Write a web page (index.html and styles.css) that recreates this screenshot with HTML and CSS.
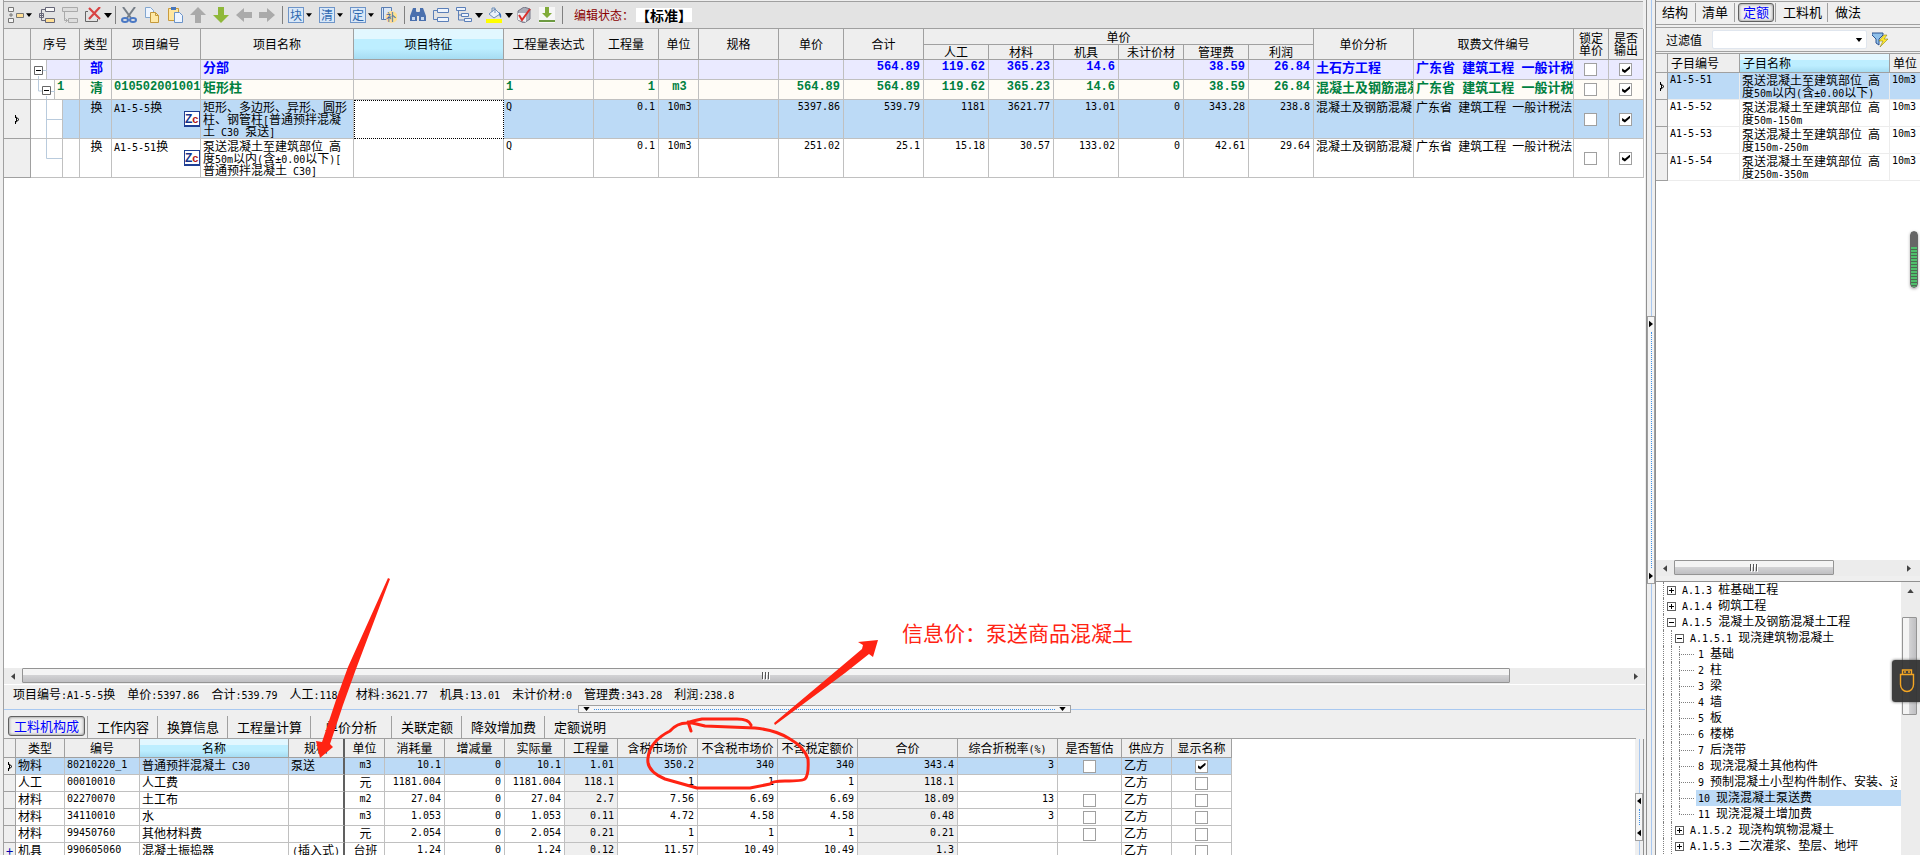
FILE: index.html
```
<!DOCTYPE html>
<html lang="zh-CN">
<head>
<meta charset="utf-8">
<title>工程计价</title>
<link rel="stylesheet" href="styles.css">
</head>
<body>
<svg class="defs" aria-hidden="true">
  <symbol id="mark" viewBox="0 0 6 9"><path d="M1.500 0v3M1.500 6v3M1.500 1.500l3.500 3-3.500 3M2.500 3v3" fill="none" stroke="#000" stroke-width="1"/></symbol>
  <symbol id="down" viewBox="0 0 8 5"><path d="M0 0h8L4 5z"/></symbol>
  <symbol id="right" viewBox="0 0 5 8"><path d="M0 0v8l5-4z"/></symbol>
  <symbol id="left" viewBox="0 0 5 8"><path d="M5 0v8L0 4z"/></symbol>
  <symbol id="up" viewBox="0 0 8 5"><path d="M0 5h8L4 0z"/></symbol>
  <symbol id="grip" viewBox="0 0 10 8"><path d="M1.500 0v7M4.500 0v7M7.500 0v7" stroke="#555"/><path d="M2.500 1v7M5.500 1v7M8.500 1v7" stroke="#fff"/></symbol>
</svg>
<div class="app">
  <main class="left">
    <div class="toolbar">
      <button class="ic" aria-label="插入"><svg viewBox="0 0 16 16"><path d="M.5.500h5v4h-5zM.5 11.500h5v4h-5z" fill="#f4f4f4" stroke="#777"/><path d="M3 6v4M1 8h4" stroke="#777"/><path d="M8.500 6.500h7v4h-7z" fill="#ffdf95" stroke="#777"/></svg></button>
      <button class="dd" aria-label="更多"><svg><use href="#down"/></svg></button>
      <button class="ic" aria-label="插入子项"><svg viewBox="0 0 16 16"><path d="M6.500.500h9v4h-9z" fill="#f8f8f8" stroke="#667"/><path d="M6.500 11.500h9v4h-9z" fill="#ffdf95" stroke="#667"/><path d="M2.500 6V2.500h4M2.500 11v2.500h4M.5 6.500h4v4h-4zM0 8.500h5M2.500 6v5" fill="none" stroke="#667"/></svg></button>
      <button class="ic" aria-label="添加子项"><svg viewBox="0 0 16 16" fill="#ddd" stroke="#aaa"><path d="M.5.500h15v4H.5zM6.500 11.500h9v4h-9z"/><path d="M2.500 5v8.500h3M3.500 11.500l2 2-2 2" fill="none"/></svg></button>
      <button class="ic" aria-label="删除"><svg viewBox="0 0 16 16"><path d="M3 4.500H.5v10h12V12" fill="none" stroke="#666"/><path d="M4 1l11 11M15 0L4 12" stroke="#d84444" stroke-width="2.200"/></svg></button>
      <button class="dd wide" aria-label="更多"><svg><use href="#down"/></svg></button>
      <i class="sep"></i>
      <button class="ic" aria-label="剪切"><svg viewBox="0 0 16 16"><path d="M2 0l8 11M14 0L6 11" stroke="#777f88" stroke-width="2"/><g fill="none" stroke="#4a78c4" stroke-width="2"><ellipse cx="4" cy="13" rx="3" ry="2"/><ellipse cx="12" cy="13" rx="3" ry="2"/></g></svg></button>
      <button class="ic" aria-label="复制"><svg viewBox="0 0 16 16"><path d="M1.500.5h5l3 3v7h-8z" fill="#eef5ff" stroke="#82a6cf"/><path d="M6.500 5.500h5l3 3v7h-8z" fill="#ffe9a6" stroke="#c4993c"/><path d="M11.500 5.500v3h3" fill="none" stroke="#c4993c"/></svg></button>
      <button class="ic" aria-label="粘贴"><svg viewBox="0 0 16 16"><path d="M1.500 1.500h10v12h-10z" fill="#ffe7a0" stroke="#c99b3c"/><path d="M4 0h5v3H4z" fill="#4776bb"/><path d="M7.500 5.500h5l3 3v7h-8z" fill="#eef5ff" stroke="#6b93c8"/></svg></button>
      <button class="ic" aria-label="上移"><svg viewBox="0 0 16 16"><path d="M8 0l8 8h-5v8H5V8H0z" fill="#aaa"/></svg></button>
      <button class="ic" aria-label="下移"><svg viewBox="0 0 16 16"><path d="M8 16L0 8h5V0h6v8h5z" fill="#8fb83a"/></svg></button>
      <button class="ic" aria-label="左移"><svg viewBox="0 0 16 16"><path d="M0 8l8-7v4h8v6H8v4z" fill="#aaa"/></svg></button>
      <button class="ic" aria-label="右移"><svg viewBox="0 0 16 16"><path d="M16 8L8 1v4H0v6h8v4z" fill="#aaa"/></svg></button>
      <i class="sep"></i>
      <button class="ic boxed">块</button>
      <button class="dd" aria-label="块菜单"><svg><use href="#down"/></svg></button>
      <button class="ic boxed">清</button>
      <button class="dd" aria-label="清单菜单"><svg><use href="#down"/></svg></button>
      <button class="ic boxed">定</button>
      <button class="dd" aria-label="定额菜单"><svg><use href="#down"/></svg></button>
      <button class="ic supp" aria-label="补充"><svg viewBox="0 0 16 16"><path d="M.5.500h10v12H.5z" fill="#dbe7f6" stroke="#5b7fb4"/><path d="M2.500 0v13" stroke="#5b7fb4"/><circle cx="10.500" cy="10" r="6" fill="#ffdf95"/></svg><span>补</span></button>
      <i class="sep"></i>
      <button class="ic" aria-label="查找"><svg viewBox="0 0 16 16" fill="#4a70ae"><path d="M3 1h3v3l1 2v8H0V9zM10 1h3l3 8v5H9V6l1-2z"/><path d="M6 5h4v4H6z"/><path d="M2 10h3v3H2zM11 10h3v3h-3z" fill="#c4d6f0"/></svg></button>
      <button class="ic" aria-label="展开"><svg viewBox="0 0 16 16" fill="#eef4fd" stroke="#5b7fb8"><path d="M4.500 1.500h11v4h-11zM4.500 10.500h11v4h-11z"/><path d="M4 3.500H.5v9H4" fill="none"/></svg></button>
      <button class="ic" aria-label="层级"><svg viewBox="0 0 16 16" fill="#eef4fd" stroke="#5b7fb8"><path d="M.5.500h9v3h-9zM5.500 6.500h7v3h-7zM8.500 11.500h7v3h-7z"/><path d="M2.500 4v9h6M2.500 8h3" fill="none"/></svg></button>
      <button class="dd wide" aria-label="层级菜单"><svg><use href="#down"/></svg></button>
      <button class="ic" aria-label="填充颜色"><svg viewBox="0 0 16 16"><path d="M0 12h16v4H0z" fill="#ff0"/><path d="M3 7l6-5 5 5-6 4z" fill="#eaf1fa" stroke="#6b8db8"/><path d="M6 5V1h3v5" fill="none" stroke="#6b8db8"/><path d="M13 5q3 2 2 6-2-1-2-6" fill="#3b70bd"/></svg></button>
      <button class="dd wide" aria-label="颜色菜单"><svg><use href="#down"/></svg></button>
      <button class="ic" aria-label="检查"><svg viewBox="0 0 16 16"><path d="M2 4l6-4 6 2v10l-6 4-6-3z" fill="#a9adb8" stroke="#778"/><path d="M2 6h8v9l-8-2z" fill="#eceef2"/><path d="M3 8l3 5 8-11" fill="none" stroke="#d9302c" stroke-width="2"/></svg></button>
      <button class="ic" aria-label="下载"><svg viewBox="0 0 16 16"><path d="M0 0h16v16H0z" fill="#f6f6f6"/><path d="M8 11L3 6h3V0h4v6h3z" fill="#80ab3a"/><path d="M0 13h16v2H0z" fill="#6d9a42"/></svg></button>
      <i class="sep"></i>
      <span class="state">编辑状态<span class="mid">：</span></span><b class="std">【标准】</b>
    </div>

    <section class="gridwrap">
      <table class="grid main">
        <colgroup><col class="w27"><col class="w49"><col class="w32"><col class="w89"><col class="w153"><col class="w150"><col class="w90"><col class="w65"><col class="w40"><col class="w80"><col class="w65"><col class="w80"><col class="w65"><col class="w65"><col class="w65"><col class="w65"><col class="w65"><col class="w65"><col class="w100"><col class="w160"><col class="w35"><col class="w35"></colgroup>
        <thead>
          <tr><th rowspan="2"></th><th rowspan="2">序号</th><th rowspan="2">类型</th><th rowspan="2">项目编号</th><th rowspan="2">项目名称</th><th rowspan="2" class="hot">项目特征</th><th rowspan="2">工程量表达式</th><th rowspan="2">工程量</th><th rowspan="2">单位</th><th rowspan="2">规格</th><th rowspan="2">单价</th><th rowspan="2">合计</th><th colspan="6">单价</th><th rowspan="2">单价分析</th><th rowspan="2">取费文件编号</th><th rowspan="2">锁定<br>单价</th><th rowspan="2">是否<br>输出</th></tr>
          <tr><th>人工</th><th>材料</th><th>机具</th><th>未计价材</th><th>管理费</th><th>利润</th></tr>
        </thead>
        <tbody>
          <tr class="part"><td class="gut"></td><td class="seq"><svg class="t1" viewBox="0 0 48 19"><path d="M0 0h15v19H0z" fill="#fff"/><path d="M15.500 0v19" stroke="#c0c0c0"/><path d="M7.500 16v3" stroke="#b9cbdd"/><path d="M3.500 6.500h8v8h-8z" fill="#fff" stroke="#666"/><path d="M5 10.500h5" stroke="#000"/><path d="M12 10.500h4" stroke="#b9cbdd"/></svg></td><td class="c">部</td><td></td><td>分部</td><td></td><td></td><td></td><td></td><td></td><td></td><td class="r">564.89</td><td class="r">119.62</td><td class="r">365.23</td><td class="r">14.6</td><td></td><td class="r">38.59</td><td class="r">26.84</td><td>土石方工程</td><td>广东省<span class="b"> </span>建筑工程<span class="b"> </span>一般计税</td><td class="k"><input type="checkbox" aria-label="锁定单价"></td><td class="k"><input type="checkbox" checked aria-label="是否输出"></td></tr>
          <tr class="item"><td class="gut"></td><td class="seq"><svg class="t1" viewBox="0 0 48 19"><path d="M0 0h23v19H0z" fill="#fff"/><path d="M23.500 0v19" stroke="#c0c0c0"/><path d="M7.500 0v11h4M15.500 16v3M20 11.500h4" stroke="#b9cbdd" fill="none"/><path d="M11.500 6.500h8v8h-8z" fill="#fff" stroke="#666"/><path d="M13 10.500h5" stroke="#000"/></svg><span class="one">1</span></td><td class="c">清</td><td class="l">010502001001</td><td>矩形柱</td><td></td><td class="l">1</td><td class="r">1</td><td class="c l">m3</td><td></td><td class="r">564.89</td><td class="r">564.89</td><td class="r">119.62</td><td class="r">365.23</td><td class="r">14.6</td><td class="r">0</td><td class="r">38.59</td><td class="r">26.84</td><td>混凝土及钢筋混凝</td><td>广东省<span class="b"> </span>建筑工程<span class="b"> </span>一般计税</td><td class="k"><input type="checkbox" aria-label="锁定单价"></td><td class="k"><input type="checkbox" checked aria-label="是否输出"></td></tr>
          <tr class="sub sel"><td class="gut"><svg class="mk"><use href="#mark"/></svg></td><td class="seq"><svg class="t2" viewBox="0 0 48 38"><path d="M0 0h31v39H0z" fill="#fff"/><path d="M31.500 0v39" stroke="#c0c0c0"/><path d="M15.500 0v39M16 19.500h15" stroke="#b9cbdd"/></svg></td><td class="c">换</td><td class="code"><span class="n">A1-5-5</span>换<span class="zc">Z<em>c</em></span></td><td>矩形、多边形、异形、圆形<br>柱、钢管柱<span class="n">[</span>普通预拌混凝<br>土<span class="n"> C30 </span>泵送<span class="n">]</span></td><td class="focus"></td><td class="n">Q</td><td class="r">0.1</td><td class="c n">10m3</td><td></td><td class="r">5397.86</td><td class="r">539.79</td><td class="r">1181</td><td class="r">3621.77</td><td class="r">13.01</td><td class="r">0</td><td class="r">343.28</td><td class="r">238.8</td><td>混凝土及钢筋混凝</td><td>广东省<span class="n"> </span>建筑工程<span class="n"> </span>一般计税法</td><td class="k"><input type="checkbox" aria-label="锁定单价"></td><td class="k"><input type="checkbox" checked aria-label="是否输出"></td></tr>
          <tr class="sub"><td class="gut"></td><td class="seq"><svg class="t2" viewBox="0 0 48 38"><path d="M31.500 0v39" stroke="#c0c0c0"/><path d="M15.500 0v19.500H31" stroke="#b9cbdd" fill="none"/></svg></td><td class="c">换</td><td class="code"><span class="n">A1-5-51</span>换<span class="zc">Z<em>c</em></span></td><td>泵送混凝土至建筑部位<span class="n"> </span>高<br>度<span class="n">50m</span>以内<span class="n">(</span>含<span class="n">±0.00</span>以下<span class="n">)[</span><br>普通预拌混凝土<span class="n"> C30]</span></td><td></td><td class="n">Q</td><td class="r">0.1</td><td class="c n">10m3</td><td></td><td class="r">251.02</td><td class="r">25.1</td><td class="r">15.18</td><td class="r">30.57</td><td class="r">133.02</td><td class="r">0</td><td class="r">42.61</td><td class="r">29.64</td><td>混凝土及钢筋混凝</td><td>广东省<span class="n"> </span>建筑工程<span class="n"> </span>一般计税法</td><td class="k"><input type="checkbox" aria-label="锁定单价"></td><td class="k"><input type="checkbox" checked aria-label="是否输出"></td></tr>
        </tbody>
      </table>
    </section>

    <div class="hbar">
      <button aria-label="向左滚动"><svg class="v"><use href="#left"/></svg></button>
      <div class="track"><div class="thumb main-thumb"><svg><use href="#grip"/></svg></div></div>
      <button aria-label="向右滚动"><svg class="v"><use href="#right"/></svg></button>
    </div>

    <div class="status">
      <span>项目编号<span class="n">:A1-5-5</span>换</span><span>单价<span class="n">:5397.86</span></span><span>合计<span class="n">:539.79</span></span><span>人工<span class="n">:1181</span></span><span>材料<span class="n">:3621.77</span></span><span>机具<span class="n">:13.01</span></span><span>未计价材<span class="n">:0</span></span><span>管理费<span class="n">:343.28</span></span><span>利润<span class="n">:238.8</span></span>
      <div class="hgrip"><svg><use href="#down"/></svg><i></i><svg><use href="#down"/></svg></div>
    </div>

    <nav class="tabs">
      <button class="on">工料机构成</button><button>工作内容</button><button>换算信息</button><button>工程量计算</button><button class="long">单价分析</button><button>关联定额</button><button>降效增加费</button><button>定额说明</button>
    </nav>

    <div class="bottom">
      <div class="bwrap">
        <table class="grid low">
          <colgroup><col class="w12"><col class="w49"><col class="w75"><col class="w149"><col class="w56"><col class="w40"><col class="w60"><col class="w60"><col class="w60"><col class="w53"><col class="w80"><col class="w80"><col class="w80"><col class="w100"><col class="w100"><col class="w64"><col class="w50"><col class="w60"></colgroup>
          <thead><tr><th></th><th>类型</th><th>编号</th><th class="hot">名称</th><th class="thick">规格</th><th>单位</th><th>消耗量</th><th>增减量</th><th>实际量</th><th>工程量</th><th>含税市场价</th><th>不含税市场价</th><th>不含税定额价</th><th>合价</th><th>综合折税率<span class="n">(%)</span></th><th>是否暂估</th><th>供应方</th><th>显示名称</th></tr></thead>
          <tbody>
            <tr class="sel"><td class="gut"><svg class="mk"><use href="#mark"/></svg></td><td>物料</td><td class="n">80210220_1</td><td>普通预拌混凝土<span class="n"> C30</span></td><td class="thick">泵送</td><td class="c n">m3</td><td class="r">10.1</td><td class="r">0</td><td class="r">10.1</td><td class="r">1.01</td><td class="r">350.2</td><td class="r">340</td><td class="r">340</td><td class="r">343.4</td><td class="r">3</td><td class="k"><input type="checkbox" aria-label="是否暂估"></td><td>乙方</td><td class="k"><input type="checkbox" checked aria-label="显示名称"></td></tr>
            <tr><td class="gut"></td><td>人工</td><td class="n">00010010</td><td>人工费</td><td class="thick"></td><td class="c">元</td><td class="r">1181.004</td><td class="r">0</td><td class="r">1181.004</td><td class="r ro">118.1</td><td class="r">1</td><td class="r">1</td><td class="r">1</td><td class="r ro">118.1</td><td></td><td></td><td>乙方</td><td class="k"><input type="checkbox" aria-label="显示名称"></td></tr>
            <tr><td class="gut"></td><td>材料</td><td class="n">02270070</td><td>土工布</td><td class="thick"></td><td class="c n">m2</td><td class="r">27.04</td><td class="r">0</td><td class="r">27.04</td><td class="r ro">2.7</td><td class="r">7.56</td><td class="r">6.69</td><td class="r">6.69</td><td class="r ro">18.09</td><td class="r">13</td><td class="k"><input type="checkbox" aria-label="是否暂估"></td><td>乙方</td><td class="k"><input type="checkbox" aria-label="显示名称"></td></tr>
            <tr><td class="gut"></td><td>材料</td><td class="n">34110010</td><td>水</td><td class="thick"></td><td class="c n">m3</td><td class="r">1.053</td><td class="r">0</td><td class="r">1.053</td><td class="r ro">0.11</td><td class="r">4.72</td><td class="r">4.58</td><td class="r">4.58</td><td class="r ro">0.48</td><td class="r">3</td><td class="k"><input type="checkbox" aria-label="是否暂估"></td><td>乙方</td><td class="k"><input type="checkbox" aria-label="显示名称"></td></tr>
            <tr><td class="gut"></td><td>材料</td><td class="n">99450760</td><td>其他材料费</td><td class="thick"></td><td class="c">元</td><td class="r">2.054</td><td class="r">0</td><td class="r">2.054</td><td class="r ro">0.21</td><td class="r">1</td><td class="r">1</td><td class="r">1</td><td class="r ro">0.21</td><td></td><td class="k"><input type="checkbox" aria-label="是否暂估"></td><td>乙方</td><td class="k"><input type="checkbox" aria-label="显示名称"></td></tr>
            <tr><td class="gut plus">+</td><td>机具</td><td class="n">990605060</td><td>混凝土振捣器</td><td class="thick end"><span class="n">(</span>插入式<span class="n">)</span></td><td class="c">台班</td><td class="r">1.24</td><td class="r">0</td><td class="r">1.24</td><td class="r ro">0.12</td><td class="r">11.57</td><td class="r">10.49</td><td class="r">10.49</td><td class="r ro">1.3</td><td></td><td></td><td>乙方</td><td class="k"><input type="checkbox" aria-label="显示名称"></td></tr>
          </tbody>
        </table>
      </div>
      <div class="vsplit small"><div class="vgrip"><svg class="v"><use href="#left"/></svg><i></i><svg class="v"><use href="#left"/></svg></div></div>
    </div>
  </main>

  <div class="vsplit big"><div class="vgrip"><svg class="v"><use href="#right"/></svg><i></i><svg class="v"><use href="#right"/></svg></div></div>

  <aside class="right">
    <nav class="tabs side"><button>结构</button><button>清单</button><button class="on">定额</button><button>工料机</button><button>做法</button></nav>
    <div class="filter"><label for="flt">过滤值</label><div class="combo"><select id="flt"><option></option></select><svg><use href="#down"/></svg></div><button aria-label="筛选"><svg viewBox="0 0 16 16"><path d="M0 1h11v2L7 7v6l-3-2V7L0 3z" fill="#8fc0ea" stroke="#2c5290"/><path d="M12 3l-5 6h4l-3 6 8-8h-4l3-4z" fill="#ffe92e" stroke="#8c8320" stroke-width=".6"/></svg></button></div>
    <div class="qwrap">
      <table class="grid quota">
        <colgroup><col class="w12"><col class="w72"><col class="w150"><col class="w40"></colgroup>
        <thead><tr><th></th><th>子目编号</th><th class="hot">子目名称</th><th>单位</th></tr></thead>
        <tbody>
          <tr class="sel"><td class="gut"><svg class="mk"><use href="#mark"/></svg></td><td class="n">A1-5-51</td><td>泵送混凝土至建筑部位<span class="n"> </span>高<br>度<span class="n">50m</span>以内<span class="n">(</span>含<span class="n">±0.00</span>以下<span class="n">)</span></td><td class="n">10m3</td></tr>
          <tr><td class="gut"></td><td class="n">A1-5-52</td><td>泵送混凝土至建筑部位<span class="n"> </span>高<br>度<span class="n">50m-150m</span></td><td class="n">10m3</td></tr>
          <tr><td class="gut"></td><td class="n">A1-5-53</td><td>泵送混凝土至建筑部位<span class="n"> </span>高<br>度<span class="n">150m-250m</span></td><td class="n">10m3</td></tr>
          <tr><td class="gut"></td><td class="n">A1-5-54</td><td>泵送混凝土至建筑部位<span class="n"> </span>高<br>度<span class="n">250m-350m</span></td><td class="n">10m3</td></tr>
        </tbody>
      </table>
    </div>
    <div class="hbar side">
      <button aria-label="向左滚动"><svg class="v"><use href="#left"/></svg></button>
      <div class="track"><div class="thumb side-thumb"><svg><use href="#grip"/></svg></div></div>
      <button aria-label="向右滚动"><svg class="v"><use href="#right"/></svg></button>
    </div>
    <div class="treewrap">
      <ul class="tree">
        <li><i class="g"></i><i class="box p"></i><span><span class="n">A.1.3 </span>桩基础工程</span></li>
        <li><i class="g"></i><i class="box p"></i><span><span class="n">A.1.4 </span>砌筑工程</span></li>
        <li><i class="g"></i><i class="box"></i><span><span class="n">A.1.5 </span>混凝土及钢筋混凝土工程</span></li>
        <li><i class="g"></i><i class="g"></i><i class="box"></i><span><span class="n">A.1.5.1 </span>现浇建筑物混凝土</span></li>
        <li class="leaf"><i class="g"></i><i class="g"></i><i class="g"></i><i class="h"></i><span><span class="n">1 </span>基础</span></li>
        <li class="leaf"><i class="g"></i><i class="g"></i><i class="g"></i><i class="h"></i><span><span class="n">2 </span>柱</span></li>
        <li class="leaf"><i class="g"></i><i class="g"></i><i class="g"></i><i class="h"></i><span><span class="n">3 </span>梁</span></li>
        <li class="leaf"><i class="g"></i><i class="g"></i><i class="g"></i><i class="h"></i><span><span class="n">4 </span>墙</span></li>
        <li class="leaf"><i class="g"></i><i class="g"></i><i class="g"></i><i class="h"></i><span><span class="n">5 </span>板</span></li>
        <li class="leaf"><i class="g"></i><i class="g"></i><i class="g"></i><i class="h"></i><span><span class="n">6 </span>楼梯</span></li>
        <li class="leaf"><i class="g"></i><i class="g"></i><i class="g"></i><i class="h"></i><span><span class="n">7 </span>后浇带</span></li>
        <li class="leaf"><i class="g"></i><i class="g"></i><i class="g"></i><i class="h"></i><span><span class="n">8 </span>现浇混凝土其他构件</span></li>
        <li class="leaf"><i class="g"></i><i class="g"></i><i class="g"></i><i class="h"></i><span><span class="n">9 </span>预制混凝土小型构件制作、安装、运</span></li>
        <li class="leaf cur"><i class="g"></i><i class="g"></i><i class="g"></i><i class="h"></i><span><span class="n">10 </span>现浇混凝土泵送费</span></li>
        <li class="leaf last"><i class="g"></i><i class="g"></i><i class="g"></i><i class="h"></i><span><span class="n">11 </span>现浇混凝土增加费</span></li>
        <li><i class="g"></i><i class="g"></i><i class="box p"></i><span><span class="n">A.1.5.2 </span>现浇构筑物混凝土</span></li>
        <li><i class="g"></i><i class="g"></i><i class="box p"></i><span><span class="n">A.1.5.3 </span>二次灌浆、垫层、地坪</span></li>
      </ul>
      <div class="vbar"><button aria-label="向上滚动"><svg><use href="#up"/></svg></button><div class="vthumb"></div></div>
    </div>
  </aside>
</div>

<div class="meter"></div>
<div class="usb"><svg viewBox="0 0 16 24" fill="none" stroke="#f5a623" stroke-width="1.400"><path d="M3.500 5V1h9v4M1.500 5.500h13v10a6.500 7 0 0 1-13 0z"/><path d="M5 3h2M9 3h2"/></svg></div>
<svg class="ink" viewBox="0 0 1920 855" aria-hidden="true">
  <g fill="#ff2313"><path d="M388 578l2 1-34 90-13 36-13 39 3 3-13 11-4-17 6 1 14-42 12-33z"/><path d="M774 723l62-52 26-22 1-4-5-3 20-2-5 17-4-3-24 19-70 52z"/></g>
  <g fill="none" stroke="#ff2313" stroke-width="3" stroke-linecap="round" stroke-linejoin="round"><path d="M751 725q-2-6-14-6h-35q-10 2-15 4-10 0-17 8-20 10-22 27-2 13 17 21l32 9h53l20-4q2-3 15-3 18 0 20-2 4-4 3-20-4-12-18-20-14-9-35-11l-50-2-17-4 3 9"/></g>
</svg>
<p class="note">信息价<span class="mid">：</span>泵送商品混凝土</p>
</body>
</html>
```

FILE: styles.css
```
* { box-sizing: border-box; }
html, body { height: 100%; }
body {
  margin: 0;
  overflow: hidden;
  background: #efefef;
  color: #000;
  font-family: "Noto Sans CJK SC", sans-serif;
  font-size: 12px;
  line-height: 12px;
}
.defs { display: none; }
button {
  margin: 0; padding: 0; border: 0; background: none;
  font: inherit; color: inherit;
}
svg { display: block; flex: none; }
.n, .r { font-family: "DejaVu Sans Mono", "Noto Sans CJK SC", monospace; font-size: 10px; }
span.n { line-height: 0; white-space: pre; }
.b { font-family: "Liberation Mono", monospace; font-size: 12px; line-height: 0; white-space: pre; }
.mid { font-family: "Noto Sans CJK TC", sans-serif; }

.app { display: flex; height: 100vh; }
.left {
  flex: 1; min-width: 0;
  display: flex; flex-direction: column;
  margin-left: 3px;
  border-left: 1px solid #a0a0a0;
}
.right {
  flex: 0 0 265px; min-width: 0; overflow: hidden;
  display: flex; flex-direction: column;
  border-left: 1px solid #909090;
}

/* toolbar */
.toolbar {
  display: flex; align-items: center;
  height: 28px; margin: 1px 3px 0 0; padding: 0 0 0 4px;
  background: #e3e3e3;
  border-top: 1px solid #a0a0a0;
  border-bottom: 1px solid #a0a0a0;
}
.ic { width: 16px; height: 16px; margin-right: 7px; flex: none; }
.ic:has(+ .dd) { margin-right: 0; }
.ic svg { width: 16px; height: 16px; }
.dd { width: 10px; margin-right: 5px; display: flex; justify-content: center; }
.dd svg { width: 6px; height: 4px; }
.dd.wide { width: 14px; margin-right: 0; }
.dd.wide svg { width: 8px; height: 5px; }
.sep { width: 1px; height: 18px; margin-right: 5px; background: #808080; flex: none; }
.boxed {
  border: 1px solid #6f95c8; background: #d9e8f8; color: #2f68b0;
  font-size: 12px; line-height: 12px;
}
.supp { position: relative; }
.supp span { position: absolute; left: 5px; top: 4px; color: #2c62ad; font-size: 10px; }
.state { margin-left: 6px; color: #8b0000; }
.std { margin-left: 2px; background: #fff; font-size: 14px; line-height: 14px; }

/* grids */
.grid { table-layout: fixed; border-collapse: separate; border-spacing: 0; width: 0; }
.grid th {
  padding: 0; height: 15px;
  background: #eee; font-weight: normal; white-space: nowrap;
  border-right: 1px solid #a0a0a0; border-bottom: 1px solid #a0a0a0;
}
.grid th.hot { background: linear-gradient(#e2f7ff 0 35%, #bdeeff 35% 65%, #a6dcf2); }
.grid td {
  padding: 1px 0 0 2px; overflow: hidden; vertical-align: top; white-space: nowrap;
  border-right: 1px solid #c0c0c0; border-bottom: 1px solid #c0c0c0;
}
.grid td.gut { background: #efefef; border-color: #a0a0a0; padding: 0; vertical-align: middle; }
.grid td.r { text-align: right; padding-right: 3px; }
.grid td.c { text-align: center; }
.grid td.end { text-align: right; padding-right: 3px; }
.grid td.k { padding: 0 1px 0 0; vertical-align: middle; }
.grid .sel td { background-color: #bcdaf6; }
.grid .sel td.gut { background: #efefef; }
.grid td.ro { background: #efefef; }
.mk { width: 6px; height: 9px; margin: 0 auto; }

.main thead tr { height: 15px; }
.main thead tr:first-child { height: 16px; }
.main td.seq { padding: 0; position: relative; }
.main .part td, .main .item td { height: 20px; padding-top: 0; font-weight: bold; font-size: 13px; line-height: 13px; }
.main .part td { color: #00f; background-color: #eaeaff; }
.main .item td { color: #008040; background-color: #fffcf6; }
.main .part td.gut, .main .item td.gut { background: #efefef; }
.main .sub td { height: 39px; }
.main .part td.r, .main .item td.r, .main .item td.l, .one {
  font-family: "Liberation Mono", monospace; font-size: 12px; line-height: 12px; padding-top: 1px;
}
.t1 { width: 48px; height: 19px; }
.t2 { width: 48px; height: 38px; }
.one { position: absolute; left: 26px; top: 0; }
.grid .sel td.focus { background: #fff; border: 1px dotted #000; }
.code { position: relative; }
.zc {
  position: absolute; right: 0; top: 11px;
  width: 16px; height: 16px;
  border: 1px solid #1f3f94; border-bottom-width: 2px; background: #fff;
  color: #17338a; font: bold 12px/14px "Liberation Sans", sans-serif;
}
.zc em { color: #b01818; font-style: normal; font-size: 11px; }

.low th { height: 19px; }
.low td { height: 17px; }
.low .thick { border-right: 2px solid #606060; }
.low td.plus { color: #0000b0; text-align: center; font-size: 13px; }
.quota th { height: 19px; text-align: left; padding-left: 3px; }
.quota td { height: 27px; border-color: #ececec; }

.w12 { width: 12px; } .w27 { width: 27px; } .w32 { width: 32px; } .w35 { width: 35px; }
.w40 { width: 40px; } .w49 { width: 49px; } .w50 { width: 50px; } .w53 { width: 53px; }
.w56 { width: 56px; } .w60 { width: 60px; } .w64 { width: 64px; } .w65 { width: 65px; }
.w72 { width: 72px; } .w75 { width: 75px; } .w80 { width: 80px; } .w89 { width: 89px; }
.w90 { width: 90px; } .w100 { width: 100px; } .w149 { width: 149px; } .w150 { width: 150px; }
.w153 { width: 153px; } .w160 { width: 160px; }

input[type="checkbox"] {
  appearance: none; display: block; position: relative;
  width: 13px; height: 13px; margin: 0 auto;
  background: #fff; border: 1px solid #a0a0a0;
}
input[type="checkbox"]:checked::before {
  content: ""; position: absolute; left: 2px; top: 2px; width: 8px; height: 7px;
  background: #000;
  clip-path: polygon(0 35%, 35% 60%, 100% 0, 100% 35%, 35% 100%, 0 75%);
}

.gridwrap { flex: 1; min-height: 0; overflow: hidden; background: #fff; margin-right: 1px; }

/* scroll bars */
.hbar { display: flex; height: 16px; margin-right: 1px; background: #ececec; }
.hbar button { width: 18px; display: flex; align-items: center; justify-content: center; }
.hbar svg.v { width: 4px; height: 7px; fill: #444; }
.track { flex: 1; }
.thumb {
  height: 15px; display: flex; align-items: center; justify-content: center;
  border: 1px solid #949494; border-radius: 1px;
  background: linear-gradient(#f4f4f4 0 45%, #d2d2d4 50%, #bfbfc2);
}
.thumb svg { width: 10px; height: 8px; }
.main-thumb { width: 92.7%; }
.side-thumb { width: 71%; }
.hbar.side { margin: 0 0 5px; padding-right: 2px; }

/* summary line and splitter */
.status {
  position: relative;
  display: flex; gap: 12px; align-items: center;
  height: 26px; padding: 0 9px 6px; margin-right: 1px;
  border-bottom: 1px solid #a8c8f0; border-top: 1px solid #fff;
  white-space: nowrap;
}
.hgrip {
  position: absolute; left: 35%; width: 30%; bottom: -4px; height: 8px;
  display: flex; align-items: center; gap: 4px; padding: 0 4px;
  background: #f6f6f6; border: 1px solid #a0a0a0;
}
.hgrip svg { width: 7px; height: 4px; }
.hgrip i { flex: 1; border-top: 1px dotted #3b8fe8; }

/* tabs */
.tabs { display: flex; height: 29px; padding: 6px 0 0 4px; border-bottom: 1px solid #a0a0a0; font-size: 13px; line-height: 13px; margin-right: 10px; }
.tabs button { padding: 0 8px 2px 9px; border-left: 1px solid #a0a0a0; white-space: nowrap; }
.tabs .on {
  height: 20px; padding: 0 5px 2px; margin-right: 2px;
  color: #00f; border: 1px solid #606060; border-radius: 3px;
  box-shadow: inset 0 0 3px #777;
}
.tabs .long { padding: 0 14px 2px; }
.tabs.side { height: 24px; margin: 1px 0 0; padding: 1px 0 2px; border-top: 1px solid #a0a0a0; flex: none; }
.tabs.side button { padding: 0 6px 2px; margin-right: 1px; }
.tabs.side button:first-child { border-left: 0; }
.tabs.side button:nth-child(2) { border-right: 1px solid #a0a0a0; }
.tabs.side .on { height: 19px; padding: 0 4px 2px; margin: 0 1px 0 2px; }
.tabs.side button:nth-child(4) { padding: 0 4px 2px 7px; }
.tabs.side button:nth-child(5) { padding: 0 7px 2px; }

.bottom { display: flex; flex: 0 0 116px; min-height: 0; }
.bwrap { flex: 1; min-width: 0; overflow: hidden; background: #fff; }

/* vertical splitters */
.vsplit {
  display: flex; align-items: center; justify-content: center; flex: none;
  background: linear-gradient(90deg, transparent 4px, #a8c8f0 4px 5px, transparent 5px);
}
.vsplit.small { width: 9px; border-right: 1px solid #909090; margin-right: 2px; }
.vsplit.big { width: 9px; border-left: 1px solid #909090; }
.vgrip {
  width: 8px; display: flex; flex-direction: column; align-items: center; gap: 4px;
  padding: 3px 0; background: #f6f6f6; border: 1px solid #a0a0a0;
}
.vgrip svg { width: 4px; height: 8px; }
.vgrip i { flex: 1; border-left: 1px dotted #3b8fe8; }
.small .vgrip { height: 48px; margin-top: 40px; }
.big .vgrip { height: 268px; margin-top: 45px; }

/* right panel */
.filter {
  display: flex; align-items: center; height: 25px; flex: none;
  margin-top: 2px; padding-left: 10px;
  border-top: 1px solid #a0a0a0; border-bottom: 1px solid #a0a0a0;
}
.combo { position: relative; flex: 0 0 155px; height: 19px; margin: 0 5px 0 10px; }
.combo select {
  appearance: none; width: 100%; height: 100%; padding: 0;
  background: #fff; border: 1px solid #e0e6ee; border-radius: 2px; font: inherit;
}
.combo svg { position: absolute; right: 4px; top: 8px; width: 8px; height: 4px; pointer-events: none; }
.filter button svg { width: 16px; height: 16px; }
.qwrap { flex: 1; min-height: 0; overflow: hidden; background: #fff; margin-top: 1px; border-top: 1px solid #a0a0a0; }
.treewrap { display: flex; flex: 0 0 274px; min-height: 0; overflow: hidden; border-top: 1px solid #909090; background: #fff; }
.tree { flex: 1; min-width: 0; list-style: none; margin: 0; padding: 0; overflow: hidden; }
.tree li { display: flex; align-items: center; height: 16px; padding-left: 7px; white-space: nowrap; }
.tree li > span { height: 16px; line-height: 14px; }
.g { width: 8px; height: 16px; border-left: 1px dotted #808080; flex: none; }
.box {
  width: 9px; height: 9px; margin: 0 6px 0 -4px; flex: none;
  border: 1px solid #606060;
  background: linear-gradient(#000, #000) 1px 3px / 5px 1px no-repeat, #fff;
}
.box.p { background: linear-gradient(#000, #000) 1px 3px / 5px 1px no-repeat, linear-gradient(#000, #000) 3px 1px / 1px 5px no-repeat, #fff; }
.h { width: 15px; margin-left: -8px; border-top: 1px dotted #808080; flex: none; }
.leaf > span { flex: 1; min-width: 0; overflow: hidden; margin-left: 2px; padding-left: 2px; margin-right: 4px; }
.tree .n { line-height: 0; }
.leaf.cur > span { background: #bcdaf6; margin-right: 0; }
.leaf.last .g:nth-of-type(3) { height: 8px; align-self: flex-start; }
.vbar { flex: 0 0 19px; background: #ececec; padding-left: 1px; }
.vbar button { display: flex; align-items: center; justify-content: center; width: 16px; height: 18px; }
.vbar button svg { width: 7px; height: 4px; fill: #444; }
.vthumb {
  width: 15px; height: 98px; margin-top: 17px;
  border: 1px solid #949494; border-radius: 1px;
  background: linear-gradient(90deg, #f4f4f4 0 45%, #d2d2d4 50%, #bfbfc2);
}

/* floating desktop widgets */
.meter {
  position: absolute; right: 2px; top: 231px; width: 8px; height: 57px;
  border-radius: 4px; border: 1px solid #666;
  background: linear-gradient(#666 15px, transparent 15px), repeating-linear-gradient(#4fbf6b 0 2px, #4a6b50 2px 3px);
  box-shadow: 0 1px 3px #aaa;
}
.usb {
  position: absolute; right: 0; top: 660px; width: 28px; height: 42px; padding: 9px 0 0 7px;
  background: rgba(50, 50, 50, .94); border-radius: 3px 0 0 3px; box-shadow: 0 0 3px #555;
}
.usb svg { width: 16px; height: 24px; }

/* red annotations over the page */
.ink { position: absolute; left: 0; top: 0; width: 1920px; height: 855px; pointer-events: none; }
.note { position: absolute; left: 902px; top: 619px; margin: 0; color: #ff2313; font-size: 21px; line-height: 26px; white-space: nowrap; }
```
